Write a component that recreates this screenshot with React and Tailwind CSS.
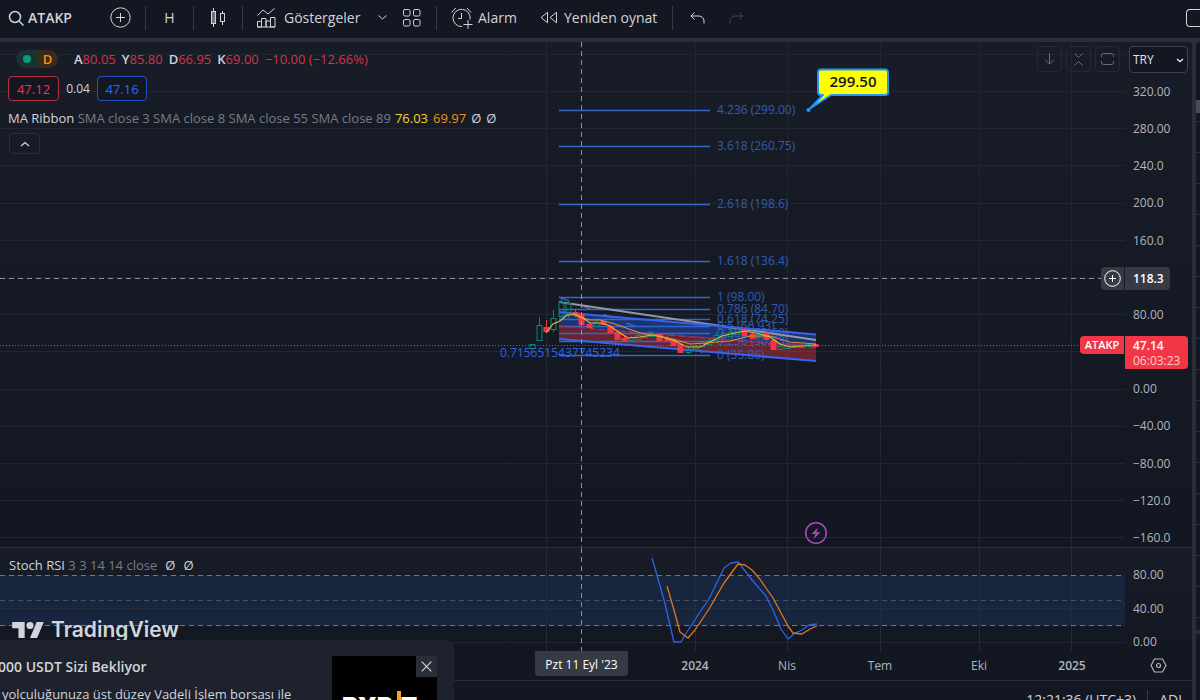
import React from "react";

const Divider = () => <span className="h-6 w-px shrink-0 bg-[#363a45]" />;

function Svg({ w, h, children, className = "" }) {
  return (
    <svg
      width={w}
      height={h}
      viewBox={`0 0 ${w} ${h}`}
      fill="none"
      stroke="currentColor"
      aria-hidden="true"
      className={`shrink-0 ${className}`}
    >
      {children}
    </svg>
  );
}

function Toolbar() {
  return (
    <header className="flex h-[38px] shrink-0 items-center overflow-hidden bg-[#131722] pb-[3px] pl-2 text-sm font-medium text-[#d1d4dc]">
      <button className="flex w-[98px] shrink-0 items-center gap-1 font-semibold">
        <Svg w={16} h={16}>
          <circle cx="7" cy="7" r="5.5" strokeWidth="1.5" />
          <path d="M11 11l4.500 4.500" strokeWidth="1.5" />
        </Svg>
        <span>ATAKP</span>
      </button>
      <button aria-label="Sembol ekle" className="flex w-[39px] shrink-0 items-center pl-1">
        <Svg w={21} h={21}>
          <circle cx="10.500" cy="10.500" r="9.700" />
          <path d="M10.500 6v9M6 10.500h9" />
        </Svg>
      </button>
      <Divider />
      <button className="w-[47px] shrink-0 text-center">H</button>
      <Divider />
      <button aria-label="Mum grafik" className="flex w-12 shrink-0 justify-center">
        <Svg w={16} h={20}>
          <rect x="1.500" y="3.500" width="4" height="12" fill="currentColor" fillOpacity=".5" />
          <path d="M3.500 0v3.500M3.500 15.500V19" />
          <rect x="10.500" y="5.500" width="4" height="8" />
          <path d="M12.500 3v2.500M12.500 13.500V17" />
        </Svg>
      </button>
      <Divider />
      <button className="flex w-[128px] shrink-0 items-center gap-2 pl-[14px]">
        <Svg w={19} h={20}>
          <path d="M.5 7.500L6 2l5 4 6.500-5.500" />
          <path d="M.5 19v-5.500h4V19zM4.500 19v-8.500h4.500V19M9 19v-6h4.500v6M13.500 19V9.500H18V19z M.5 19H18" />
        </Svg>
        <span>Göstergeler</span>
      </button>
      <button aria-label="Favoriler" className="flex w-[22px] shrink-0 justify-center">
        <Svg w={9} h={5}>
          <path d="M.5.5l4 3.500 4-3.500" />
        </Svg>
      </button>
      <button aria-label="Şablonlar" className="flex w-[43px] shrink-0 pl-[10px]">
        <Svg w={18} h={18}>
          <rect x=".5" y=".5" width="6.500" height="6.500" rx="1.500" />
          <rect x="10.500" y=".5" width="6.500" height="6.500" rx="1.500" />
          <rect x=".5" y="10.500" width="6.500" height="6.500" rx="1.500" />
          <rect x="10.500" y="10.500" width="6.500" height="6.500" rx="1.500" />
        </Svg>
      </button>
      <Divider />
      <button className="flex w-[82px] shrink-0 items-center gap-1 pl-[14px]">
        <Svg w={23} h={22}>
          <path d="M19 12.500A8.600 8.600 0 1 0 11 19.500M10.500 6v5.500H7M.7 5.500L4.700 1M16 1l4 4.500M17 13v9M12.500 17.500h9" />
        </Svg>
        <span>Alarm</span>
      </button>
      <button className="ml-[21px] flex w-[132px] shrink-0 items-center gap-[6px] whitespace-nowrap">
        <Svg w={18} h={13}>
          <path d="M7.500 1.300v10.400L1 6.500zM16.500 1.300v10.400L10 6.500z" />
        </Svg>
        <span>Yeniden oynat</span>
      </button>
      <Divider />
      <button aria-label="Geri al" className="ml-[17px] shrink-0">
        <Svg w={15} h={12}>
          <path d="M4.500.5L1 4l3.500 3.500M1 4h8a5 5 0 0 1 5 5v2.500" />
        </Svg>
      </button>
      <button aria-label="Yinele" className="ml-6 shrink-0 text-[#434651]">
        <Svg w={15} h={12}>
          <path d="M10.500.5L14 4l-3.500 3.500M14 4H6a5 5 0 0 0-5 5v2.500" />
        </Svg>
      </button>
      <button aria-label="Düzen" className="ml-auto h-[18px] w-[14px] shrink-0 rounded-l-sm border border-r-0 border-[#d1d4dc]" />
    </header>
  );
}

const months = [546, 695, 787, 880, 979, 1071];
const priceGrid = [54, 91, 128, 165, 203, 240, 277, 314, 351, 389, 426, 463, 500, 537];

const fibs = [
  [110, "4.236 (299.00)"],
  [146, "3.618 (260.75)"],
  [204, "2.618 (198.6)"],
  [261, "1.618 (136.4)"],
  [297, "1 (98.00)"],
  [309, "0.786 (84.70)"],
  [319, "0.618 (74.25)"],
  [326, "0.5 (66.93)"],
  [333, "0.382 (59.60)"],
  [341, "0.236 (50.53)"],
  [355, "0 (35.86)"],
];

// x, body top, body bottom, wick top, wick bottom, rising
const candles = [
  [532, 344, 348, 344, 348, 1],
  [539, 325, 340, 317, 340, 1],
  [546, 327, 331, 320, 333, 0],
  [553, 318, 329, 310, 332, 1],
  [561, 302, 316, 297, 318, 1],
  [568, 303, 315, 300, 318, 1],
  [575, 312, 315, 309, 317, 0],
  [581, 314, 324, 314, 326, 0],
  [589, 324, 327, 322, 328, 0],
  [596, 322, 326, 321, 327, 1],
  [603, 321, 324, 320, 325, 0],
  [610, 326, 332, 325, 333, 0],
  [617, 332, 339, 331, 339, 0],
  [624, 338, 340, 336, 341, 0],
  [631, 337, 340, 336, 341, 1],
  [638, 335, 339, 334, 340, 1],
  [645, 334, 337, 332, 338, 1],
  [652, 333, 336, 331, 337, 1],
  [659, 334, 340, 333, 340, 0],
  [667, 338, 340, 336, 341, 0],
  [673, 339, 345, 338, 346, 0],
  [680, 344, 352, 344, 352, 0],
  [688, 349, 352, 346, 354, 1],
  [695, 346, 350, 345, 351, 1],
  [702, 343, 346, 342, 347, 1],
  [709, 340, 344, 338, 345, 1],
  [716, 335, 340, 332, 341, 1],
  [723, 333, 337, 331, 339, 1],
  [730, 332, 336, 330, 337, 1],
  [737, 329, 334, 328, 335, 1],
  [744, 329, 335, 328, 336, 0],
  [752, 334, 338, 333, 339, 0],
  [758, 334, 337, 332, 339, 1],
  [766, 333, 339, 332, 340, 0],
  [773, 340, 349, 339, 349, 0],
  [780, 346, 349, 345, 350, 1],
  [787, 345, 348, 343, 349, 1],
  [794, 345, 347, 343, 348, 1],
  [801, 345, 347, 344, 348, 1],
  [808, 344, 346, 343, 347, 1],
  [815, 344, 346, 344, 346, 0],
];

function PriceCanvas() {
  return (
    <svg className="block h-full w-full" aria-label="ATAKP fiyat grafiği">
      <g transform="translate(0 -42)">
        <g stroke="#222631" shapeRendering="crispEdges">
          {priceGrid.map((y) => (
            <line key={y} x1="0" x2="100%" y1={y + 0.5} y2={y + 0.5} />
          ))}
          {months.map((x) => (
            <line key={x} x1={x + 0.5} x2={x + 0.5} y1="42" y2="1200" />
          ))}
        </g>
        <path d="M559 312L816 334.500V347.500L559 326z" fill="#2962ff" fillOpacity=".36" />
        <path d="M559 326L816 345V361L559 339z" fill="#f23645" fillOpacity=".38" />
        <g fill="#2f5db2" fontSize="12">
          {fibs.map(([y, label]) => (
            <g key={label}>
              <path d={`M559 ${y}.5H710`} stroke="#3467c8" strokeWidth="1.500" />
              <text x="717" y={y + 4}>{label}</text>
            </g>
          ))}
        </g>
        <path d="M559 297L709 355" stroke="#3467c8" strokeDasharray="10 14" strokeWidth="1.500" />
        <path d="M559 302L816 340" stroke="#9598a1" strokeWidth="2" />
        <path d="M559 312L816 334.500M559 339L816 361" stroke="#3563ee" strokeWidth="2" />
        <path d="M559 326L816 347.500" stroke="#c02f46" strokeDasharray="6 4" />
        {candles.map(([x, t, b, wt, wb, up]) => (
          <g key={x} stroke={up ? "#0b8673" : "#f23645"}>
            <path d={`M${x + 0.5} ${wt}V${t}M${x + 0.5} ${b}V${wb}`} />
            <rect x={x - 2} y={t + 0.5} width="5" height={b - t} fill={up ? "none" : "#f23645"} />
          </g>
        ))}
        <polyline
          fill="none"
          stroke="#e08a35"
          strokeWidth="1.200"
          points="575,316 590,320 600,320 615,324 640,333 660,336 676,340 690,344 705,343 730,341 750,336 770,336 790,342 816,344"
        />
        <polyline
          fill="none"
          stroke="#d8bb3a"
          strokeWidth="1.200"
          points="546,333 553,324 560,321 567,315 575,314 583,318 590,323 602,323 610,326 620,333 628,338 640,337 652,335 662,337 675,341 687,347 700,347 712,341 722,336 735,333 745,331 760,334 770,337 780,344 790,347 800,346 816,345"
        />
        <text x="500" y="357" fontSize="12" fill="#2f60e6">0.7156515437745234</text>
        <line x1="0" x2="100%" y1="345.500" y2="345.500" stroke="#f23645" strokeDasharray="1 2" />
        <g stroke="#8d909b" strokeDasharray="5 4">
          <line x1="0" x2="100%" y1="278.500" y2="278.500" />
          <line x1="581.500" x2="581.500" y1="42" y2="1200" />
        </g>
        <g stroke="#2196f3" strokeWidth="2" strokeLinejoin="round">
          <path
            d="M821 69.500H885a3 3 0 0 1 3 3V92a3 3 0 0 1-3 3H831L810 108.500 823 95H821a3 3 0 0 1-3-3V72.500a3 3 0 0 1 3-3z"
            fill="#ffff00"
          />
          <circle cx="808.500" cy="110" r="1" fill="#2196f3" />
        </g>
        <text x="853" y="87" textAnchor="middle" fontSize="15" fontWeight="600" fill="#131722">299.50</text>
        <circle cx="816" cy="533" r="10.300" fill="none" stroke="#ab47bc" strokeWidth="1.500" />
        <path d="M818 527.500L811.500 534H815.500L813.500 539 820.500 532.300H816.500z" fill="#ab47bc" />
      </g>
    </svg>
  );
}

function StochCanvas() {
  return (
    <svg className="block h-full w-full" aria-label="Stoch RSI grafiği">
      <g transform="translate(0 -548)">
        <rect x="0" y="575" width="100%" height="51" fill="#17263e" />
        <g stroke="#222c3b" shapeRendering="crispEdges">
          <line x1="0" x2="100%" y1="608.500" y2="608.500" />
          <line x1="0" x2="100%" y1="642.500" y2="642.500" stroke="#222631" />
          {months.map((x) => (
            <line key={x} x1={x + 0.5} x2={x + 0.5} y1="548" y2="651" />
          ))}
        </g>
        <g strokeDasharray="5 4" stroke="#6f7889">
          <line x1="0" x2="100%" y1="575.500" y2="575.500" />
          <line x1="0" x2="100%" y1="600.500" y2="600.500" stroke="#435067" />
          <line x1="0" x2="100%" y1="625.500" y2="625.500" />
        </g>
        <line x1="581.500" x2="581.500" y1="548" y2="651" stroke="#8d909b" strokeDasharray="5 4" />
        <g fill="none" strokeWidth="1.300" strokeLinejoin="round">
          <polyline
            stroke="#2e63e6"
            points="652,558 664,600 674,642 681,642 685,635 702,609 709,599 724,568 731,563 738,562 746,572 752,580 766,596 773,610 781,629 788,639 795,633 802,630 809,625 817,624"
          />
          <polyline
            stroke="#e2761f"
            points="667,586 674,610 680,632 688,638 695,630 709,609 724,583 738,564 745,565 752,570 759,578 766,588 773,598 788,626 793,633 802,634 810,629 817,626"
          />
        </g>
      </g>
    </svg>
  );
}

function Legend() {
  return (
    <div className="absolute left-2 top-2 flex flex-col items-start text-[13px] leading-4 text-[#d1d4dc]">
      <div className="flex h-[18px] items-center gap-4 pl-2">
        <span className="flex h-[18px] w-[42px] overflow-hidden rounded-full">
          <span className="flex flex-1 items-center justify-center bg-[#183332]">
            <span className="size-2 rounded-full bg-[#089981]" />
          </span>
          <span className="flex flex-1 items-center justify-center bg-[#3a2a1c] font-semibold text-[#f7930a]">D</span>
        </span>
        <span className="flex gap-[6px] whitespace-nowrap text-[#d2344a]">
          {[["A", "80.05"], ["Y", "85.80"], ["D", "66.95"], ["K", "69.00"]].map(([k, v]) => (
            <span key={k}>
              <span className="font-semibold text-[#d1d4dc]">{k}</span>
              {v}
            </span>
          ))}
          <span>−10.00 (−12.66%)</span>
        </span>
      </div>
      <div className="mt-2 flex items-center gap-[7px]">
        <button className="h-[25px] w-[51px] rounded border border-[#b92f42] bg-[#131722] text-[#f23645]">47.12</button>
        <span className="w-6 text-center text-xs">0.04</span>
        <button className="h-[25px] w-[50px] rounded border border-[#2450c4] bg-[#131722] text-[#2f66ff]">47.16</button>
      </div>
      <div className="mt-2 flex h-[18px] items-center gap-1 whitespace-nowrap">
        <span>
          <span className="font-medium">MA Ribbon</span>{" "}
          <span className="text-[#787b86]">SMA close 3 SMA close 8 SMA close 55 SMA close 89</span>
        </span>
        <span className="flex gap-[5px]">
          <span className="font-medium text-[#f5d327]">76.03</span>
          <span className="font-medium text-[#e8951f]">69.97</span>
          <span>Ø</span>
          <span>Ø</span>
        </span>
      </div>
      <button
        aria-label="Göstergeleri gizle"
        className="mt-[6px] ml-px flex h-[21px] w-[31px] items-center justify-center rounded-sm border border-[#2a2e39]"
      >
        <Svg w={10} h={6}>
          <path d="M1 5l4-3.500L9 5" strokeWidth="1.300" />
        </Svg>
      </button>
    </div>
  );
}

function PaneButtons() {
  const cls = "flex h-[26px] w-[25px] items-center justify-center rounded border border-[#252934]";
  return (
    <div className="absolute right-[5px] top-1 flex gap-1 text-[#6a6d78]">
      <button aria-label="Aşağı taşı" className={cls}>
        <Svg w={11} h={12}>
          <path d="M5.500 0v11M1 6.500l4.500 4.500L10 6.500" />
        </Svg>
      </button>
      <button aria-label="Daralt" className={cls}>
        <Svg w={9} h={13}>
          <path d="M.5.5l4 4 4-4M.5 12.500l4-4 4 4" />
        </Svg>
      </button>
      <button aria-label="Büyüt" className={cls}>
        <Svg w={13} h={12}>
          <path d="M.5 4V2.500a2 2 0 0 1 2-2h8a2 2 0 0 1 2 2V4M.5 8v1.500a2 2 0 0 0 2 2h8a2 2 0 0 0 2-2V8" />
        </Svg>
      </button>
    </div>
  );
}

const prices = [
  "320.00", "280.00", "240.0", "200.0", "160.0", "", "80.00", "",
  "0.00", "−40.00", "−80.00", "−120.0", "−160.0",
];

function PriceScale() {
  return (
    <div className="relative flex w-[67px] shrink-0 flex-col pb-px pl-1 pr-1 pt-1 text-xs text-[#b2b5be]">
      <div className="relative text-[#e0e3eb]">
        <select
          aria-label="Para birimi"
          className="block h-[27px] w-full appearance-none rounded border border-[#3c404b] bg-[#131722] pl-[3px] text-xs"
        >
          <option>TRY</option>
        </select>
        <Svg w={8} h={5} className="pointer-events-none absolute right-1 top-3">
          <path d="M1 1l3 2.500L7 1" strokeWidth="1.500" />
        </Svg>
      </div>
      <div className="mt-[11px] flex flex-1 flex-col justify-between pl-1">
        {prices.map((p, i) => (
          <span key={i} className="h-4 leading-4">{p}</span>
        ))}
      </div>
      <div className="absolute right-[22px] top-[225px] flex h-[23px] gap-px text-white">
        <button aria-label="Fiyata emir ekle" className="flex w-[23px] items-center justify-center rounded-l-sm bg-[#363a45]">
          <Svg w={17} h={17}>
            <circle cx="8.500" cy="8.500" r="7.800" />
            <path d="M8.500 5v7M5 8.500h7" />
          </Svg>
        </button>
        <span className="flex w-[45px] items-center rounded-r-sm bg-[#363a45] pl-2 font-semibold">118.3</span>
      </div>
      <div className="absolute right-1 top-[294px] flex items-start gap-px text-white">
        <span className="flex h-[18px] w-11 items-center justify-center rounded-l-sm bg-[#f23645] text-[11px] font-semibold">ATAKP</span>
        <span className="flex h-[33px] w-[63px] flex-col justify-center rounded-r-sm bg-[#f23645] pl-2 leading-[15px]">
          <span className="font-semibold">47.14</span>
          <span className="text-[#fccbcf]">06:03:23</span>
        </span>
      </div>
    </div>
  );
}

function TimeScale() {
  return (
    <div className="relative flex h-[30px] shrink-0 border-b border-[#2a2e39] bg-[#131722] text-xs">
      <svg className="block h-full flex-1" aria-label="Zaman ekseni">
        <g fill="#b2b5be" fontSize="12" textAnchor="middle">
          <text x="695" y="19" fontWeight="600">2024</text>
          <text x="787" y="19">Nis</text>
          <text x="880" y="19">Tem</text>
          <text x="979" y="19">Eki</text>
          <text x="1072" y="19" fontWeight="600">2025</text>
        </g>
      </svg>
      <span className="absolute left-[535px] top-0 flex h-[25px] w-[93px] items-center justify-center rounded-b-sm bg-[#363a45] pt-[3px] font-medium text-white">
        Pzt 11 Eyl '23
      </span>
      <button aria-label="Ölçek ayarları" className="flex w-[67px] items-center justify-center text-[#b2b5be]">
        <Svg w={17} h={15}>
          <path d="M4.500 1h8L16 7.500 12.500 14h-8L1 7.500z" strokeWidth="1.200" />
          <circle cx="8.500" cy="7.500" r="2" strokeWidth="1.200" />
        </Svg>
      </button>
    </div>
  );
}

function Promo() {
  return (
    <aside className="absolute bottom-0 left-0 flex h-[60px] w-[454px] justify-between overflow-hidden rounded-tr-lg bg-[#1e222d] pr-[17px] pt-4 text-[#d1d4dc]">
      <div className="-ml-[2px] whitespace-nowrap">
        <p className="text-sm font-semibold leading-[22px]">000 USDT Sizi Bekliyor</p>
        <p className="mt-[5px] pl-1 text-[13px] leading-[22px]">yolculuğunuza üst düzey Vadeli İşlem borsası ile</p>
      </div>
      <div className="relative h-[105px] w-[105px] shrink-0 overflow-hidden bg-black">
        <div className="flex items-start pl-[10px] pt-[35px] font-['Inter'] text-2xl font-black leading-8 text-white">
          <span>BYB</span>
          <span className="ml-1 h-6 w-1 bg-[#f7a123]" />
          <span>T</span>
        </div>
        <button aria-label="Kapat" className="absolute right-0 top-0 flex size-[21px] items-center justify-center bg-[#2a2e39]">
          <Svg w={11} h={11}>
            <path d="M.7.7l9.600 9.600M10.300.7L.7 10.300" strokeWidth="1.200" />
          </Svg>
        </button>
      </div>
    </aside>
  );
}

export default function App() {
  return (
    <div className="relative flex h-screen w-full flex-col overflow-hidden bg-[#2a2e39] font-['Open_Sans','Noto_Sans',sans-serif]">
      <Toolbar />
      <main className="flex min-h-0 flex-1 gap-1 pt-1">
        <div className="flex min-w-0 flex-1 flex-col overflow-hidden rounded-tr bg-[#131722]">
          <section className="flex min-h-0 flex-1 bg-linear-to-b from-[#181c27] to-[#131722]">
            <div className="relative min-w-0 flex-1">
              <PriceCanvas />
              <Legend />
              <PaneButtons />
            </div>
            <PriceScale />
          </section>
          <section className="flex h-[104px] shrink-0 border-t border-[#2a2e39] bg-linear-to-b from-[#181c27] to-[#131722]">
            <div className="relative min-w-0 flex-1">
              <StochCanvas />
              <div className="absolute left-[9px] top-2 flex gap-2 text-[13px] leading-[18px] text-[#d1d4dc]">
                <span>
                  Stoch RSI <span className="text-[#787b86]">3 3 14 14 close</span>
                </span>
                <span>Ø</span>
                <span>Ø</span>
              </div>
              <a href="#tradingview" className="absolute left-3 top-[70px] flex items-center gap-[7px] text-[#d1d4dc]">
                <svg width="32" height="16" viewBox="0 4 35.500 18" fill="currentColor" aria-hidden="true">
                  <path d="M14 22H7V11H0V4h14v18zM28 22h-8l7.500-18h8L28 22z" />
                  <circle cx="20" cy="8" r="4" />
                </svg>
                <span className="font-['Inter'] text-[21px] font-semibold leading-6">TradingView</span>
              </a>
            </div>
            <div className="flex w-[67px] shrink-0 flex-col justify-between pb-px pl-2 pt-[19px] text-xs text-[#b2b5be]">
              <span className="leading-4">80.00</span>
              <span className="leading-4">40.00</span>
              <span className="leading-4">0.00</span>
            </div>
          </section>
          <TimeScale />
          <footer className="flex h-[19px] shrink-0 items-start justify-end gap-[11px] overflow-hidden pr-[10px] pt-[9px] text-sm font-medium leading-5 text-[#d1d4dc]">
            <span>12:21:36 (UTC+3)</span>
            <span className="h-5 w-px bg-[#363a45]" />
            <button>ADJ</button>
          </footer>
        </div>
        <div className="flex w-1 shrink-0 flex-col overflow-hidden rounded-tl bg-[#131722]">
          <div className="h-[58px] shrink-0" />
          <div className="h-[13px] shrink-0 bg-[#4a4d57]" />
          <div className="h-[9px] shrink-0 border-b border-[#2a2e39]" />
          {Array.from({ length: 16 }, (_, i) => (
            <div key={i} className="h-[31px] shrink-0 border-b border-[#2a2e39]" />
          ))}
          <div className="mt-[12px] h-1 shrink-0 bg-[#2a2e39]" />
        </div>
      </main>
      <Promo />
    </div>
  );
}
